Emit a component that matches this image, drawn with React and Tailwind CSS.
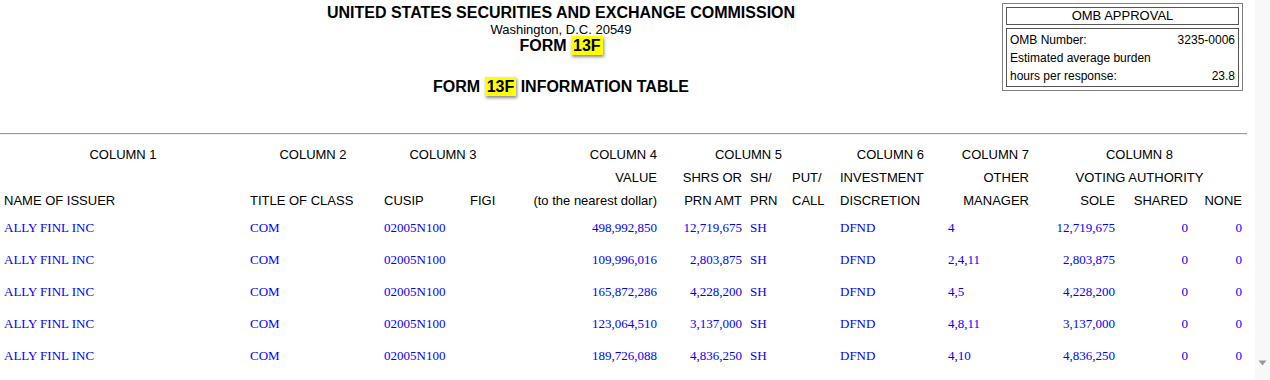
import React from "react";

const rows = [
  ["498,992,850", "12,719,675", "4", "12,719,675"],
  ["109,996,016", "2,803,875", "2,4,11", "2,803,875"],
  ["165,872,286", "4,228,200", "4,5", "4,228,200"],
  ["123,064,510", "3,137,000", "4,8,11", "3,137,000"],
  ["189,726,088", "4,836,250", "4,10", "4,836,250"],
];

const grid =
  "grid grid-cols-[246px_134px_86px_40px_155px_85px_42px_48px_92px_105px_86px_73px_54px]";

function Hl({ children }) {
  return (
    <span className="bg-[#ffff00] px-[2px] py-[1px] shadow-[1px_2px_3px_#8a8a8a]">
      {children}
    </span>
  );
}

export default function App() {
  return (
    <div className="flex h-[380px] w-[1270px] overflow-hidden bg-white text-black font-['Liberation_Sans',Arial,sans-serif]">
      <div className="w-[1255px] shrink-0">
        {/* Header */}
        <div className="flex items-start">
          <div className="ml-[122px] w-[878px] pt-[4px] text-center">
            <div className="text-[16px] leading-[18px] font-bold">
              UNITED STATES SECURITIES AND EXCHANGE COMMISSION
            </div>
            <div className="text-[13px] leading-[15px]">Washington, D.C. 20549</div>
            <div className="text-[16px] leading-[18px] font-bold">
              FORM <Hl>13F</Hl>
            </div>
            <div className="mt-[23px] text-[16px] leading-[18px] font-bold">
              FORM <Hl>13F</Hl> INFORMATION TABLE
            </div>
          </div>
          <div className="ml-[2px] mt-[3px] flex w-[241px] flex-col gap-[3px] border border-[#808080] p-[3px] text-[12px]">
            <div className="h-[18px] border border-[#555] text-center text-[13px] leading-[16px]">
              OMB APPROVAL
            </div>
            <div className="border border-[#555] px-[3px] pt-[2px] pb-[1px] leading-[18px]">
              <div className="flex justify-between">
                <span>OMB Number:</span>
                <span>3235-0006</span>
              </div>
              <div>Estimated average burden</div>
              <div className="flex justify-between">
                <span>hours per response:</span>
                <span>23.8</span>
              </div>
            </div>
          </div>
        </div>

        <div className="mt-[37px] h-0 w-[1247px] border-t border-b border-t-[#9a9a9a] border-b-[#eeeeee]" />

        {/* Table */}
        <div className="mt-[8px] text-[13px] leading-[15px]">
          <div className={`${grid} h-[23px] items-center`}>
            <div className="text-center">COLUMN 1</div>
            <div className="text-center">COLUMN 2</div>
            <div className="col-span-2 text-center">COLUMN 3</div>
            <div className="pr-1 text-right">COLUMN 4</div>
            <div className="col-span-3 text-center">COLUMN 5</div>
            <div className="pr-1 text-right">COLUMN 6</div>
            <div className="pr-1 text-right">COLUMN 7</div>
            <div className="col-span-3 text-center">COLUMN 8</div>
          </div>
          <div className={`${grid} h-[23px] items-center`}>
            <div />
            <div />
            <div />
            <div />
            <div className="pr-1 text-right">VALUE</div>
            <div className="pr-1 text-right whitespace-nowrap">SHRS OR</div>
            <div className="pl-1">SH/</div>
            <div className="pl-1">PUT/</div>
            <div className="pl-1">INVESTMENT</div>
            <div className="pr-1 text-right">OTHER</div>
            <div className="col-span-3 text-center">VOTING AUTHORITY</div>
          </div>
          <div className={`${grid} h-[23px] items-center whitespace-nowrap`}>
            <div className="pl-1">NAME OF ISSUER</div>
            <div className="pl-1">TITLE OF CLASS</div>
            <div className="pl-1">CUSIP</div>
            <div className="pl-1">FIGI</div>
            <div className="pr-1 text-right">(to the nearest dollar)</div>
            <div className="pr-1 text-right">PRN AMT</div>
            <div className="pl-1">PRN</div>
            <div className="pl-1">CALL</div>
            <div className="pl-1">DISCRETION</div>
            <div className="pr-1 text-right">MANAGER</div>
            <div className="pr-1 text-right">SOLE</div>
            <div className="pr-1 text-right">SHARED</div>
            <div className="pr-1 text-right">NONE</div>
          </div>
          <div className="-mt-px">
            {rows.map((r, i) => (
              <div
                key={i}
                className={`${grid} h-[32px] items-center whitespace-nowrap font-['Liberation_Serif','Times_New_Roman',serif] text-[#0000ff]`}
              >
                <div className="pl-1">ALLY FINL INC</div>
                <div className="pl-1">COM</div>
                <div className="pl-1">02005N100</div>
                <div />
                <div className="pr-1 text-right">{r[0]}</div>
                <div className="pr-1 text-right">{r[1]}</div>
                <div className="pl-1">SH</div>
                <div />
                <div className="pl-1">DFND</div>
                <div className="pl-[20px]">{r[2]}</div>
                <div className="pr-1 text-right">{r[3]}</div>
                <div className="pr-1 text-right">0</div>
                <div className="pr-1 text-right">0</div>
              </div>
            ))}
          </div>
        </div>
      </div>

      {/* Scrollbar */}
      <div className="flex w-[15px] shrink-0 flex-col justify-end bg-[#f8f8f8]">
        <svg width="15" height="20" viewBox="0 0 15 20" className="block">
          <polygon points="3.5,0.5 11.5,0.5 7.5,5.5" fill="#9a9a9a" />
        </svg>
      </div>
    </div>
  );
}
